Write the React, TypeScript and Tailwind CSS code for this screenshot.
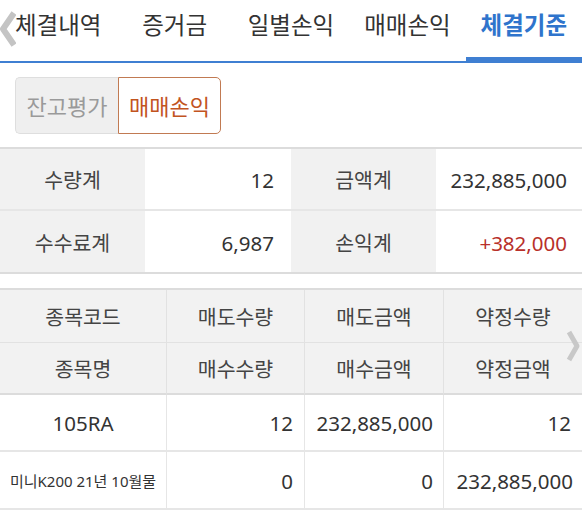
const tabs = ["체결내역", "증거금", "일별손익", "매매손익", "체결기준"];

const font = { fontFamily: '"Noto Sans", "Noto Sans CJK KR", sans-serif' };

const App: React.FC = () => {
  return (
    <div className="w-[582px] h-[512px] bg-white overflow-hidden" style={font}>
      {/* tabs */}
      <div className="relative grid grid-cols-5 border-b-2 border-[#3f7fd2]">
        {tabs.map((t, i) => (
          <div
            key={t}
            className={
              i === 4
                ? "h-[61px] flex justify-center pt-[8px] text-[23.5px] leading-[34px] font-bold text-[#2f74cc] border-b-[4px] border-[#3f7fd2]"
                : "h-[61px] flex justify-center pt-[8px] text-[23.5px] leading-[34px] text-[#333]"
            }
          >
            {t}
          </div>
        ))}
        <svg className="absolute left-0 top-[9px]" width="16" height="40" viewBox="0 0 16 40">
          <path d="M14 4 L3 20 L14 36" fill="none" stroke="#c4c4c4" strokeWidth="6" strokeLinejoin="round" />
        </svg>
      </div>

      {/* segmented */}
      <div className="px-[15px] pt-[14px] pb-[13px] flex">
        <div className="w-[103px] h-[57px] flex items-center justify-center pt-[2px] bg-[#efefef] border border-r-0 border-[#dedede] rounded-l-[5px] text-[22px] text-[#9a9a9a]">
          잔고평가
        </div>
        <div className="w-[103px] h-[57px] flex items-center justify-center pt-[2px] bg-white border border-[#c17a52] rounded-r-[5px] text-[22px] text-[#c2541f]">
          매매손익
        </div>
      </div>

      {/* summary */}
      <div className="border-t-2 border-[#dcdcdc] grid grid-cols-[145px_146px_145px_146px] text-[20.5px]">
        <div className="h-[62px] flex items-center justify-center pt-[3px] bg-[#f1f1f1] text-[#444] border-b-2 border-[#e6e6e6]">수량계</div>
        <div className="h-[62px] flex items-center justify-end pt-[3px] pr-[17px] text-[#333] border-b-2 border-[#e6e6e6]">12</div>
        <div className="h-[62px] flex items-center justify-center pt-[3px] bg-[#f1f1f1] text-[#444] border-b-2 border-[#e6e6e6]">금액계</div>
        <div className="h-[62px] flex items-center justify-end pt-[3px] pr-[15px] text-[#333] border-b-2 border-[#e6e6e6]">232,885,000</div>
        <div className="h-[63px] flex items-center justify-center pt-[3px] bg-[#f1f1f1] text-[#444] border-b-2 border-[#dcdcdc]">수수료계</div>
        <div className="h-[63px] flex items-center justify-end pt-[3px] pr-[17px] text-[#333] border-b-2 border-[#dcdcdc]">6,987</div>
        <div className="h-[63px] flex items-center justify-center pt-[3px] bg-[#f1f1f1] text-[#444] border-b-2 border-[#dcdcdc]">손익계</div>
        <div className="h-[63px] flex items-center justify-end pt-[3px] pr-[15px] text-[#b8302a] border-b-2 border-[#dcdcdc]">+382,000</div>
      </div>

      {/* detail table */}
      <div className="relative mt-[14px] border-t-2 border-[#dcdcdc] grid grid-cols-[166px_138px_139px_139px] text-[20.5px]">
        {["종목코드", "매도수량", "매도금액", "약정수량"].map((h, i) => (
          <div
            key={h}
            className={
              "h-[53px] flex items-center justify-center pt-[3px] bg-[#f2f2f2] text-[#444] border-b border-[#e2e2e2]" +
              (i > 0 ? " border-l" : "")
            }
          >
            {h}
          </div>
        ))}
        {["종목명", "매수수량", "매수금액", "약정금액"].map((h, i) => (
          <div
            key={h}
            className={
              "h-[52px] flex items-center justify-center pt-[3px] bg-[#f2f2f2] text-[#444] border-b-2 border-[#dcdcdc]" +
              (i > 0 ? " border-l border-l-[#e2e2e2]" : "")
            }
          >
            {h}
          </div>
        ))}
        <div className="h-[57px] flex items-center justify-center pt-[2px] text-[#333] border-b-2 border-[#e6e6e6]">105RA</div>
        <div className="h-[57px] flex items-center justify-end pt-[2px] pr-[11px] text-[#333] border-b-2 border-l border-[#e6e6e6]">12</div>
        <div className="h-[57px] flex items-center justify-end pt-[2px] pr-[10px] text-[#333] border-b-2 border-l border-[#e6e6e6]">232,885,000</div>
        <div className="h-[57px] flex items-center justify-end pt-[2px] pr-[11px] text-[#333] border-b-2 border-l border-[#e6e6e6]">12</div>
        <div className="h-[58px] flex items-center justify-center pt-[2px] text-[15px] text-[#333] border-b-2 border-[#e6e6e6]">미니K200 21년 10월물</div>
        <div className="h-[58px] flex items-center justify-end pt-[2px] pr-[11px] text-[#333] border-b-2 border-l border-[#e6e6e6]">0</div>
        <div className="h-[58px] flex items-center justify-end pt-[2px] pr-[10px] text-[#333] border-b-2 border-l border-[#e6e6e6]">0</div>
        <div className="h-[58px] flex items-center justify-end pt-[2px] pr-[9px] text-[#333] border-b-2 border-l border-[#e6e6e6]">232,885,000</div>
        <svg className="absolute right-[1px] top-[38px]" width="16" height="36" viewBox="0 0 16 36">
          <path d="M4 4 L12 18 L4 32" fill="none" stroke="#c8c8c8" strokeWidth="5" strokeLinejoin="round" />
        </svg>
      </div>
    </div>
  );
};

export default App;
